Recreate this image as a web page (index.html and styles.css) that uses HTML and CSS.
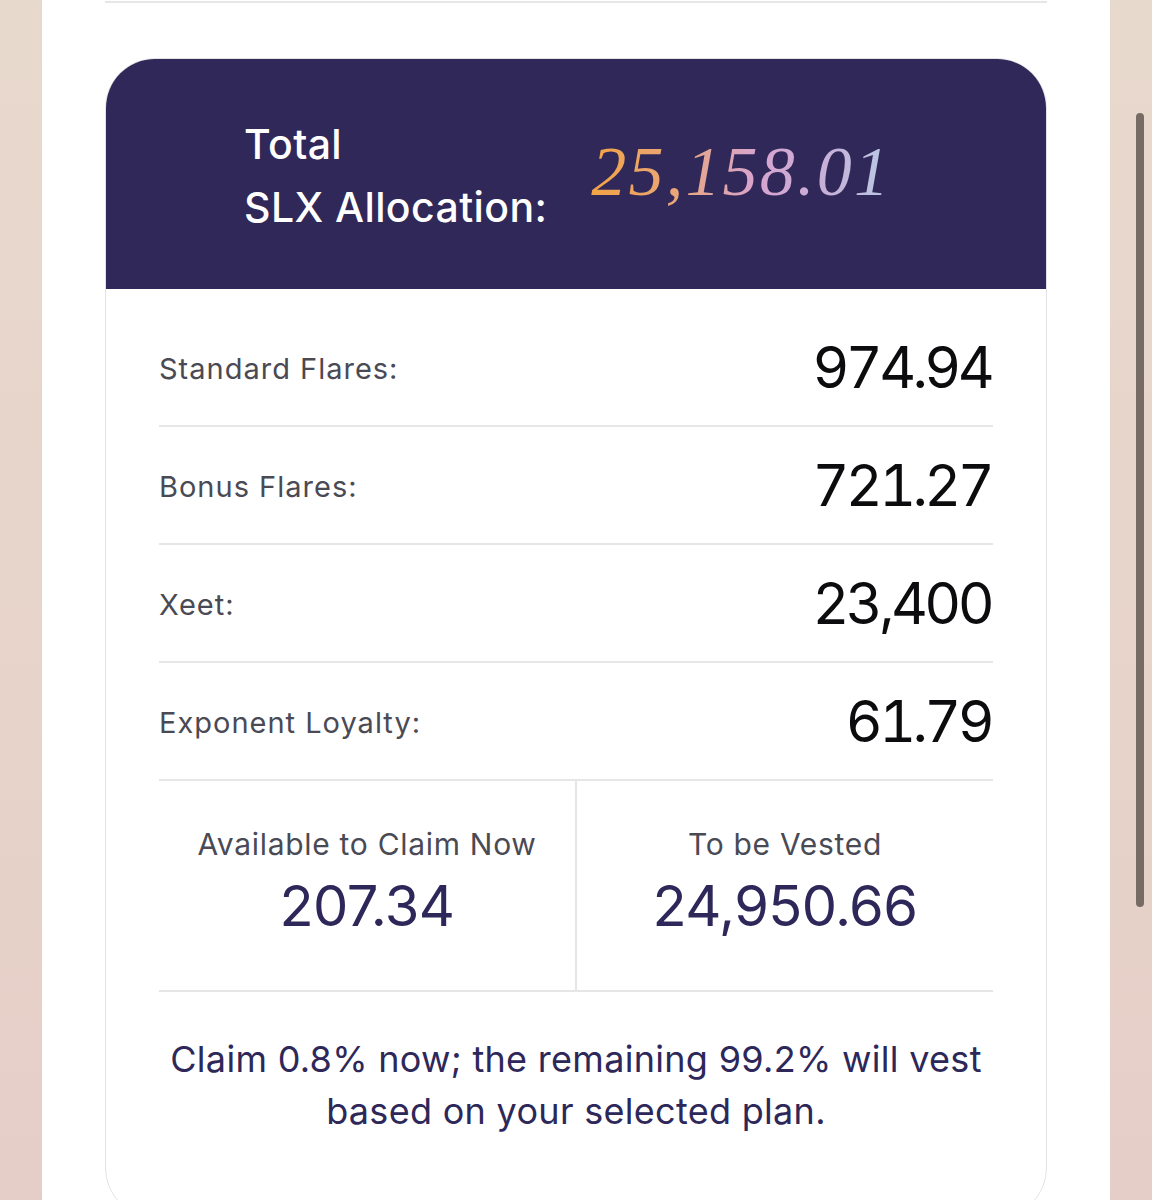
FILE: index.html
```html
<!DOCTYPE html>
<html lang="en">
<head>
<meta charset="utf-8">
<title>SLX Allocation</title>
<link rel="stylesheet" href="styles.css">
</head>
<body>
<div class="page">
  <div class="side side-left"></div>
  <main class="panel">
    <div class="top-rule"></div>
    <section class="card">
      <header class="card-head">
        <h1 class="head-title">Total<br>SLX Allocation:</h1>
        <div class="head-total">25,158.01</div>
      </header>
      <div class="card-body">
        <div class="row"><span class="row-label">Standard Flares:</span><span class="row-value">974.94</span></div>
        <div class="row"><span class="row-label">Bonus Flares:</span><span class="row-value">721.27</span></div>
        <div class="row"><span class="row-label">Xeet:</span><span class="row-value">23,400</span></div>
        <div class="row"><span class="row-label">Exponent Loyalty:</span><span class="row-value">61.79</span></div>
        <div class="split">
          <div class="split-col">
            <div class="split-label">Available to Claim Now</div>
            <div class="split-value">207.34</div>
          </div>
          <div class="split-col">
            <div class="split-label">To be Vested</div>
            <div class="split-value">24,950.66</div>
          </div>
        </div>
        <p class="note">Claim 0.8% now; the remaining 99.2% will vest based on your selected plan.</p>
      </div>
    </section>
  </main>
  <div class="side side-right"><div class="scrollbar"></div></div>
</div>
</body>
</html>
```
FILE: styles.css
```css
* { box-sizing: border-box; }
html, body { margin: 0; padding: 0; }
body {
  font-family: Inter, "Noto Sans", "Liberation Sans", sans-serif;
  background: #ffffff;
}
.page {
  display: flex;
  width: 1152px;
  height: 1200px;
  overflow: hidden;
}
.side {
  width: 42px;
  flex: 0 0 42px;
  background: linear-gradient(180deg, #e8d9cd 0%, #e7d3ca 60%, #e5cec7 100%);
}
.side-right { position: relative; }
.scrollbar {
  position: absolute;
  left: 26px;
  top: 113px;
  width: 8px;
  height: 794px;
  border-radius: 4px;
  background: #766b65;
}
.panel {
  flex: 1;
  background: #ffffff;
  padding: 0 63px;
}
.top-rule {
  height: 3px;
  border-bottom: 2px solid #e6e6e8;
}
.card {
  margin-top: 55px;
  border: 1.5px solid #e3e3e6;
  border-radius: 50px;
  overflow: hidden;
  height: 1160px;
}
.card-head {
  height: 230px;
  background: #302858;
  display: flex;
  align-items: center;
  padding-left: 138px;
  gap: 44px;
}
.head-title {
  margin: 0;
  color: #ffffff;
  font-weight: 500;
  font-size: 41px;
  letter-spacing: 0.4px;
  line-height: 63px;
  padding-top: 4px;
}
.head-total {
  font-family: "Liberation Serif", "DejaVu Serif", serif;
  font-style: italic;
  font-size: 70px;
  letter-spacing: 2.2px;
  line-height: 1;
  background: linear-gradient(90deg, #f2a444 0%, #e9a67e 30%, #d7a4cf 55%, #c7b0d8 78%, #b9c9e4 100%);
  -webkit-background-clip: text;
  background-clip: text;
  color: transparent;
  padding-bottom: 4px;
}
.card-body {
  padding: 20px 53px 0;
}
.row {
  height: 118px;
  display: flex;
  align-items: center;
  justify-content: space-between;
  border-bottom: 2px solid #e6e6e8;
}
.row-label {
  font-size: 29px;
  letter-spacing: 1px;
  color: #4a4a55;
  padding-top: 2px;
}
.row-value {
  font-size: 57px;
  color: #0c0c0f;
  letter-spacing: -3.6px;
  margin-right: 2px;
  font-weight: 400;
  font-variant-numeric: tabular-nums;
}
.split {
  display: flex;
  height: 211px;
  border-bottom: 2px solid #e6e6e8;
}
.split-col {
  flex: 1;
  display: flex;
  flex-direction: column;
  align-items: center;
  padding-top: 44px;
}
.split-col + .split-col {
  border-left: 2px solid #e6e6e8;
}
.split-label {
  font-size: 30px;
  letter-spacing: 0.7px;
  color: #4a4a55;
  line-height: 38px;
}
.split-value {
  font-size: 56px;
  color: #2d2859;
  line-height: 70px;
  padding-top: 8px;
  letter-spacing: -0.6px;
}
.note {
  margin: 0;
  padding: 41px 0 0;
  text-align: center;
  color: #2d2859;
  font-size: 36px;
  letter-spacing: 0.3px;
  line-height: 52px;
}
```
